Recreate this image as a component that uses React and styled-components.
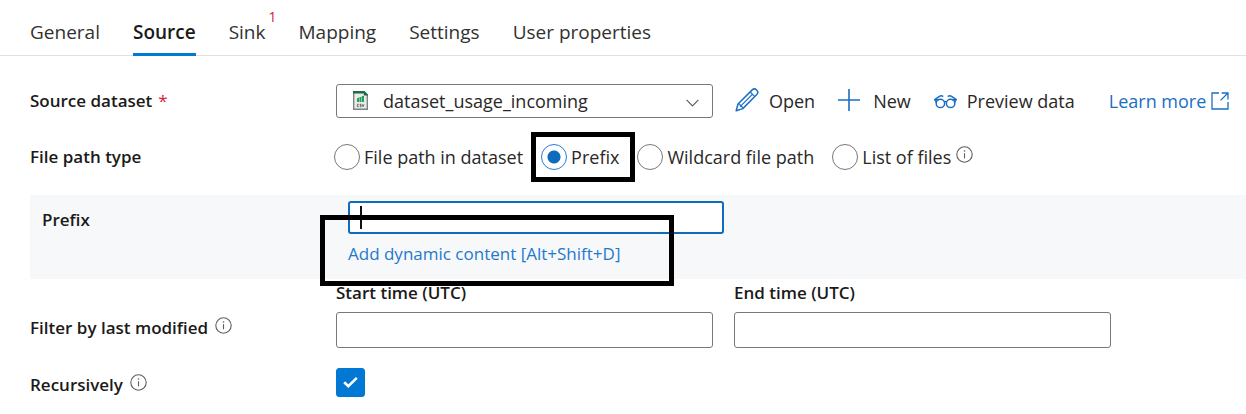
import React from "react";
import styled, { createGlobalStyle, css } from "styled-components";

const GlobalStyle = createGlobalStyle`
  *, *::before, *::after { box-sizing: border-box; }
  body {
    margin: 0;
    background: #fff;
    color: #292827;
    font-family: "Open Sans", "Noto Sans", sans-serif;
    font-size: 18px;
    line-height: 24px;
  }
  button, input, select { font: inherit; color: inherit; margin: 0; }
`;

const Page = styled.main`
  width: 100%;
  overflow-x: hidden;
`;

const TabBar = styled.nav`
  display: flex;
  gap: 33px;
  padding: 8px 30px 0;
  border-bottom: 1px solid #e1e1e1;
`;

const Tab = styled.button`
  position: relative;
  height: 47px;
  padding: 0;
  border: 0;
  background: none;
  white-space: nowrap;
  font-size: 19px;
  font-weight: ${(p) => (p.$active ? 600 : 400)};
  color: ${(p) => (p.$active ? "#1b1a19" : "#323130")};
  ${(p) =>
    p.$active &&
    css`
      &::after {
        content: "";
        position: absolute;
        left: 0;
        right: 0;
        bottom: -1px;
        height: 3px;
        background: #0078d4;
      }
    `}
`;

const ErrorCount = styled.span`
  position: absolute;
  left: 100%;
  top: 0;
  margin-left: 3px;
  font-size: 14px;
  line-height: 18px;
  font-weight: 400;
  color: #dc1633;
`;

const Form = styled.form`
  display: flex;
  flex-direction: column;
  padding: 28px 0 16px 30px;
`;

const Row = styled.div`
  display: grid;
  grid-template-columns: 306px minmax(0, 1fr);
  align-items: ${(p) => p.$align || "center"};
  margin-bottom: ${(p) => p.$after || 0}px;
`;

const LabelCell = styled.div`
  display: flex;
  align-items: center;
  gap: 7px;
  padding-bottom: ${(p) => (p.$raised ? 8 : 0)}px;
`;

const Label = styled.label`
  font-size: 17px;
  font-weight: 600;
  color: #1b1a19;
  white-space: nowrap;
`;

const Required = styled.span`
  margin-left: 6px;
  color: #dc1633;
  font-weight: 400;
`;

const Toolbar = styled.div`
  display: flex;
  align-items: center;
`;

const SelectBox = styled.div`
  position: relative;
  flex: 0 1 377px;
  min-width: 200px;
  margin-right: 22px;
`;

const Select = styled.select`
  display: block;
  width: 100%;
  height: 34px;
  padding: 0 40px 0 46px;
  appearance: none;
  border: 1px solid #7a7876;
  border-radius: 3px;
  background: #fff;
`;

const FileGlyph = styled.svg`
  position: absolute;
  left: 17px;
  top: 7px;
  pointer-events: none;
`;

const Chevron = styled.svg`
  position: absolute;
  right: 14px;
  top: 15px;
  pointer-events: none;
`;

const Action = styled.button`
  display: flex;
  align-items: center;
  gap: ${(p) => p.$gap || 10}px;
  margin-right: 23px;
  padding: 0;
  border: 0;
  background: none;
  white-space: nowrap;
`;

const LearnMore = styled.a`
  display: flex;
  align-items: center;
  gap: 5px;
  margin-left: 11px;
  color: #1a6fc4;
  text-decoration: none;
  white-space: nowrap;
`;

const RadioGroup = styled.div`
  display: flex;
  align-items: center;
  gap: 18px;
  margin-left: -2px;
`;

const Option = styled.label`
  position: relative;
  display: flex;
  align-items: center;
  gap: 4px;
  white-space: nowrap;
`;

const Radio = styled.input`
  appearance: none;
  width: 26px;
  height: 26px;
  border: 1px solid #7a7876;
  border-radius: 50%;
  background: #fff;
  &:checked {
    border-color: #2b7cd3;
    background: radial-gradient(circle, #0f6cbd 6px, #fff 7px);
  }
`;

const OptionHighlight = styled.span`
  position: absolute;
  inset: -12px -16px -12px -10px;
  border: 5px solid #000;
  pointer-events: none;
`;

const OptionWithHelp = styled.div`
  display: flex;
  align-items: center;
  gap: 5px;
`;

const InfoIcon = styled.svg`
  flex: none;
  margin-bottom: 6px;
`;

const PrefixPanel = styled.section`
  display: grid;
  grid-template-columns: 306px minmax(0, 1fr);
  margin-bottom: 2px;
  padding: 6px 0 13px 12px;
  background: #f7f8fa;
`;

const PrefixLabel = styled(Label)`
  padding-top: 7px;
`;

const PrefixField = styled.div`
  position: relative;
  width: 376px;
  max-width: 100%;
`;

const TextInput = styled.input`
  display: block;
  width: 100%;
  height: 36px;
  padding: 0 10px;
  border: 1px solid #7a7876;
  border-radius: 3px;
  background: #fff;
`;

const FocusedInput = styled(TextInput)`
  height: 33px;
  border: 2px solid #0f6cbd;
  outline: none;
  caret-color: transparent;
`;

const Caret = styled.span`
  position: absolute;
  left: 12px;
  top: 5px;
  width: 2px;
  height: 23px;
  background: #111;
`;

const DynamicLink = styled.a`
  display: inline-block;
  margin-top: 8px;
  font-size: 17px;
  color: #2478cc;
  text-decoration: none;
  white-space: nowrap;
`;

const FieldHighlight = styled.span`
  position: absolute;
  top: 14px;
  left: -28px;
  width: 354px;
  height: 71px;
  border: 5px solid #000;
  pointer-events: none;
`;

const DateFields = styled.div`
  display: flex;
  gap: 21px;
`;

const DateField = styled.div`
  display: flex;
  flex-direction: column;
  gap: 7px;
  flex: 0 1 377px;
`;

const CheckBoxWrap = styled.div`
  position: relative;
  width: 29px;
  height: 29px;
`;

const CheckBox = styled.input`
  display: block;
  appearance: none;
  width: 29px;
  height: 29px;
  border: 1px solid #7a7876;
  border-radius: 3px;
  &:checked {
    border-color: #0078d4;
    background: #0078d4;
  }
`;

const CheckMark = styled.svg`
  position: absolute;
  inset: 0;
  pointer-events: none;
`;

function Info() {
  return (
    <InfoIcon width="17" height="17" viewBox="0 0 17 17" fill="none" role="img" aria-label="Info">
      <circle cx="8.5" cy="8.5" r="7.7" stroke="#605e5c" strokeWidth="1.1" />
      <path d="M8.5 7.2V12.3" stroke="#605e5c" strokeWidth="1.1" />
      <circle cx="8.5" cy="5" r="0.8" fill="#605e5c" />
    </InfoIcon>
  );
}

function PencilIcon() {
  return (
    <svg width="24" height="26" viewBox="0 0 24 26" fill="none" stroke="#1a6fc4" strokeWidth="1.5" strokeLinejoin="round">
      <path d="M1.2 22.8L3 16L17.2 1.9C18.5 .7 20.4 .8 21.6 2C22.9 3.2 23 5.2 21.8 6.5L7.8 20.6Z" />
      <path d="M15.2 4L19.8 8.6M3 16C4.8 15.8 5.4 16.6 5.4 18.3C7.2 18.3 8 19 7.8 20.6M5.4 18.3L17.3 6.3" strokeWidth="1.2" />
    </svg>
  );
}

function PlusIcon() {
  return (
    <svg width="22" height="24" viewBox="0 0 22 24" stroke="#1a6fc4" strokeWidth="1.6">
      <path d="M0 11H22M11 0V22" />
    </svg>
  );
}

function GlassesIcon() {
  return (
    <svg width="23" height="16" viewBox="0 0 23 16" fill="none" stroke="#1a6fc4" strokeWidth="1.5">
      <circle cx="6.4" cy="10.4" r="4.2" />
      <circle cx="16.6" cy="10.4" r="4.2" />
      <path d="M10.2 8.9C11 8.3 12 8.3 12.8 8.9M0 6.7H5M23 6.7H18M1 6.4L5.4 3.4C6.8 2.5 8 2.6 9.2 3.6M22 6.4L17.6 3.4C16.2 2.5 15 2.6 13.8 3.6M1.2 6.7L2.4 9.6M21.8 6.7L20.6 9.6" />
    </svg>
  );
}

function ExternalIcon() {
  return (
    <svg width="18" height="18" viewBox="0 0 18 18" fill="none" stroke="#1a6fc4" strokeWidth="1.3">
      <path d="M8 1H1V17H17V10M10.6 1H17V7.5M17 1L9.6 8.4" />
    </svg>
  );
}

export default function App() {
  return (
    <Page>
      <GlobalStyle />
      <TabBar>
        <Tab type="button">General</Tab>
        <Tab type="button" $active>Source</Tab>
        <Tab type="button">
          Sink<ErrorCount>1</ErrorCount>
        </Tab>
        <Tab type="button">Mapping</Tab>
        <Tab type="button">Settings</Tab>
        <Tab type="button">User properties</Tab>
      </TabBar>

      <Form onSubmit={(e) => e.preventDefault()}>
        <Row $after={26}>
          <LabelCell>
            <Label htmlFor="dataset">
              Source dataset<Required>*</Required>
            </Label>
          </LabelCell>
          <Toolbar>
            <SelectBox>
              <Select id="dataset" defaultValue="usage">
                <option value="usage">dataset_usage_incoming</option>
              </Select>
              <FileGlyph width="15" height="19" viewBox="0 0 15 19">
                <path d="M.7 1H11L14.3 4.3V18.3H.7Z" fill="#e9ebea" stroke="#7d8583" strokeWidth="1.4" />
                <path d="M0 0H11.4L15 3.6V4.4H10.8V2.6H0Z" fill="#1e6b48" />
                <path d="M4 7.6L6 6.4V11H4ZM6.5 6H8.3V11H6.5ZM8.8 5H11V11H8.8Z" fill="#21a05c" />
                <path d="M5.8 13.3H4.4V15.7H5.8M8.4 13.3H7V14.4H8.2V15.7H6.8M9.2 13.2L10.1 15.7L11 13.2" fill="none" stroke="#555" strokeWidth=".8" />
              </FileGlyph>
              <Chevron width="13" height="8" viewBox="0 0 13 8" fill="none" stroke="#605e5c" strokeWidth="1.2">
                <path d="M.6 .8L6.5 6.8L12.4 .8" />
              </Chevron>
            </SelectBox>
            <Action type="button"><PencilIcon />Open</Action>
            <Action type="button" $gap={13}><PlusIcon />New</Action>
            <Action type="button"><GlassesIcon />Preview data</Action>
            <LearnMore href="#learn">Learn more<ExternalIcon /></LearnMore>
          </Toolbar>
        </Row>

        <Row $after={25}>
          <LabelCell>
            <Label as="span" id="path-type">File path type</Label>
          </LabelCell>
          <RadioGroup role="radiogroup" aria-labelledby="path-type">
            <Option><Radio type="radio" name="path" />File path in dataset</Option>
            <Option>
              <Radio type="radio" name="path" defaultChecked />Prefix
              <OptionHighlight />
            </Option>
            <Option><Radio type="radio" name="path" />Wildcard file path</Option>
            <OptionWithHelp>
              <Option><Radio type="radio" name="path" />List of files</Option>
              <Info />
            </OptionWithHelp>
          </RadioGroup>
        </Row>

        <PrefixPanel>
          <PrefixLabel htmlFor="prefix">Prefix</PrefixLabel>
          <PrefixField>
            <FocusedInput id="prefix" type="text" />
            <Caret />
            <DynamicLink href="#dynamic">Add dynamic content [Alt+Shift+D]</DynamicLink>
            <FieldHighlight />
          </PrefixField>
        </PrefixPanel>

        <Row $align="end" $after={20}>
          <LabelCell $raised>
            <Label as="span">Filter by last modified</Label>
            <Info />
          </LabelCell>
          <DateFields>
            <DateField>
              <Label htmlFor="start">Start time (UTC)</Label>
              <TextInput id="start" type="text" />
            </DateField>
            <DateField>
              <Label htmlFor="end">End time (UTC)</Label>
              <TextInput id="end" type="text" />
            </DateField>
          </DateFields>
        </Row>

        <Row $align="end">
          <LabelCell>
            <Label htmlFor="recursive">Recursively</Label>
            <Info />
          </LabelCell>
          <CheckBoxWrap>
            <CheckBox id="recursive" type="checkbox" defaultChecked />
            <CheckMark width="29" height="29" viewBox="0 0 29 29" fill="none" stroke="#fff" strokeWidth="2.6">
              <path d="M8.2 14.2L12.3 18.2L20.8 9.8" />
            </CheckMark>
          </CheckBoxWrap>
        </Row>
      </Form>
    </Page>
  );
}
